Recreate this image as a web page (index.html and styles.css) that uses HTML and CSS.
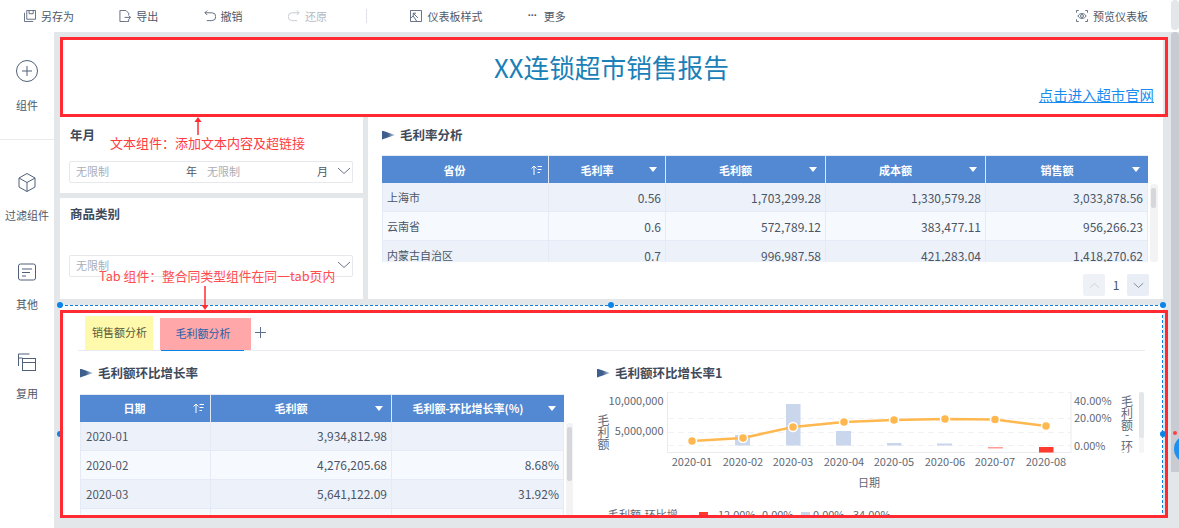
FILE: index.html
```html
<!DOCTYPE html>
<html lang="zh">
<head>
<meta charset="utf-8">
<title>XX连锁超市销售报告</title>
<link rel="stylesheet" href="styles.css">
</head>
<body>
<header class="toolbar">
  <div class="tool"><svg class="ti" viewBox="0 0 13 13"><path d="M.5 3v9.500H10"/><path d="M3 .5h9.500V10H3z"/><path d="M5.500 .5v3.500h4.500V.5"/></svg><span>另存为</span></div>
  <div class="tool"><svg class="ti" viewBox="0 0 13 13"><path d="M8 12.500H1V.5h6.500l3 3v2"/><path d="M10.500 10v2.500H8"/><path d="M6 8h6.500M10.500 6l2 2-2 2"/></svg><span>导出</span></div>
  <div class="tool"><svg class="ti" viewBox="0 0 13 13"><path d="M3.500.5 1 3l2.500 2.500"/><path d="M1 3h7.500a4 4 0 0 1 0 8.500H3"/></svg><span>撤销</span></div>
  <div class="tool off"><svg class="ti" viewBox="0 0 13 13"><path d="M9.500.5 12 3 9.500 5.500"/><path d="M12 3H4.500a4 4 0 0 0 0 8.500H10"/></svg><span>还原</span></div>
  <div class="sep"></div>
  <div class="tool"><svg class="ti" viewBox="0 0 13 13"><path d="M.5.500h12v12H.5z"/><path d="M3.500 3.500l5 5M3.500 3.500h3M3.500 3.500v3M.5 9l3-2.500 4 6"/></svg><span>仪表板样式</span></div>
  <div class="tool more"><span class="dots">···</span><span>更多</span></div>
  <div class="tool preview"><svg class="ti" viewBox="0 0 13 13"><path d="M.5 3V.5H3M10 .5h2.500V3M12.500 10v2.500H10M3 12.500H.5V10"/><path d="M2 6.500C4 3 9 3 11 6.500 9 10 4 10 2 6.500z"/><circle cx="6.500" cy="6.500" r="1.600"/></svg><span>预览仪表板</span></div>
  <div class="bar-top"></div>
</header>
<div class="main">
  <nav class="side">
    <div class="nav first">
      <svg class="ni" viewBox="0 0 22 22"><circle cx="11" cy="11" r="10.500"/><path d="M11 6v10M6 11h10"/></svg>
      <span>组件</span>
    </div>
    <div class="nav filter-nav">
      <svg class="ni" viewBox="0 0 22 22"><path d="M11 2.500l8 4.500v9l-8 4.500-8-4.500V7z"/><path d="M3 7l8 4.500L19 7M11 11.500v9"/></svg>
      <span>过滤组件</span>
    </div>
    <div class="nav other-nav">
      <svg class="ni" viewBox="0 0 22 22"><rect x="2.500" y="3" width="17" height="16" rx="2"/><path d="M6 8h10M6 11.500h8M6 15h4"/></svg>
      <span>其他</span>
    </div>
    <div class="nav reuse-nav">
      <svg class="ni" viewBox="0 0 22 22"><path d="M2.500 15V3h11"/><path d="M2.500 7h4"/><rect x="6.500" y="7.500" width="13" height="12"/><path d="M6.500 11.500h13"/></svg>
      <span>复用</span>
    </div>
  </nav>

  <main class="canvas">
    <section class="banner">
      <h1 class="report">XX连锁超市销售报告</h1>
      <a class="site" href="#">点击进入超市官网</a>
    </section>

    <section class="upper">
      <div class="filters">
        <div class="filter f1">
          <div class="f-title">年月</div>
          <div class="field">
            <span class="hint w1">无限制</span><span class="unit">年</span>
            <span class="hint w2">无限制</span><span class="unit">月</span>
            <svg class="chev" viewBox="0 0 14 8"><path d="M1 1l6 5.500L13 1"/></svg>
          </div>
        </div>
        <div class="filter f2">
          <div class="f-title">商品类别</div>
          <div class="field">
            <span class="hint grow">无限制</span>
            <svg class="chev" viewBox="0 0 14 8"><path d="M1 1l6 5.500L13 1"/></svg>
          </div>
        </div>
      </div>
      <div class="panel">
        <div class="w-title"><i class="flag"></i>毛利率分析</div>
        <div class="tbl-row">
          <div class="tbl-clip top">
            <table class="tbl t-top">
              <colgroup><col class="c167"><col class="c117"><col class="c160"><col class="c160"><col class="c162"></colgroup>
              <thead><tr>
                <th><div class="th"><span>省份</span><svg class="sort" viewBox="0 0 11 10"><path d="M3 10V1M.5 3.500 3 1l2.500 2.500M6.500 1.500H11M6.500 4.500h4M6.500 7.500h2.500"/></svg></div></th>
                <th><div class="th"><span>毛利率</span><i class="tri"></i></div></th>
                <th><div class="th"><span>毛利额</span><i class="tri"></i></div></th>
                <th><div class="th"><span>成本额</span><i class="tri"></i></div></th>
                <th><div class="th"><span>销售额</span><i class="tri"></i></div></th>
              </tr></thead>
              <tbody>
                <tr><td class="cn">上海市</td><td class="n">0.56</td><td class="n">1,703,299.28</td><td class="n">1,330,579.28</td><td class="n">3,033,878.56</td></tr>
                <tr><td class="cn">云南省</td><td class="n">0.6</td><td class="n">572,789.12</td><td class="n">383,477.11</td><td class="n">956,266.23</td></tr>
                <tr><td class="cn">内蒙古自治区</td><td class="n">0.7</td><td class="n">996,987.58</td><td class="n">421,283.04</td><td class="n">1,418,270.62</td></tr>
              </tbody>
            </table>
          </div>
          <div class="sb sb-top"><div class="thumb"></div></div>
        </div>
        <div class="pager">
          <div class="pg dis"><svg viewBox="0 0 14 8"><path d="M1 7l6-5.500L13 7"/></svg></div>
          <div class="pg-n">1</div>
          <div class="pg on"><svg viewBox="0 0 14 8"><path d="M1 1l6 5.500L13 1"/></svg></div>
        </div>
      </div>
    </section>

    <section class="tabw">
      <div class="tabs">
        <div class="tab yellow">销售额分析</div>
        <div class="tab pink">毛利额分析</div>
        <svg class="add" viewBox="0 0 11 11"><path d="M5.500 0v11M0 5.500h11"/></svg>
      </div>
      <div class="tab-body">
        <div class="left">
          <div class="w-title"><i class="flag"></i>毛利额环比增长率</div>
          <div class="tbl-row">
            <div class="tbl-clip bot">
              <table class="tbl t-bot">
                <colgroup><col class="c131"><col class="c181"><col class="c172"></colgroup>
                <thead><tr>
                  <th><div class="th"><span>日期</span><svg class="sort" viewBox="0 0 11 10"><path d="M3 10V1M.5 3.500 3 1l2.500 2.500M6.500 1.500H11M6.500 4.500h4M6.500 7.500h2.500"/></svg></div></th>
                  <th><div class="th"><span>毛利额</span><i class="tri"></i></div></th>
                  <th><div class="th"><span>毛利额-环比增长率(%)</span><i class="tri"></i></div></th>
                </tr></thead>
                <tbody>
                  <tr><td>2020-01</td><td class="n">3,934,812.98</td><td class="n"></td></tr>
                  <tr><td>2020-02</td><td class="n">4,276,205.68</td><td class="n">8.68%</td></tr>
                  <tr><td>2020-03</td><td class="n">5,641,122.09</td><td class="n">31.92%</td></tr>
                  <tr><td></td><td class="n"></td><td class="n"></td></tr>
                </tbody>
              </table>
            </div>
            <div class="sb sb-bot"><div class="thumb"></div></div>
          </div>
        </div>
        <div class="right">
          <div class="w-title"><i class="flag"></i>毛利额环比增长率1</div>
          <svg class="chart" viewBox="597 381 566 137">
            <defs><clipPath id="axis-clip"><rect x="1115" y="392" width="22" height="61"/></clipPath></defs>
            <g class="grid">
              <path d="M668 392.500H1071M668 418.500H1071M668 432.500H1071M668 445.500H1071"/>
            </g>
            <path class="axis" d="M667.500 392V452.500H1071V392"/>
            <g class="bar">
              <rect x="735" y="435" width="15" height="10.500"/>
              <rect x="786" y="404" width="14.500" height="41.500"/>
              <rect x="836" y="431" width="15" height="14.500"/>
              <rect x="887" y="443" width="14.500" height="2.500"/>
              <rect x="937" y="443.500" width="15" height="2"/>
            </g>
            <rect class="neg1" x="988" y="447" width="15" height="1.500"/>
            <rect class="neg2" x="1039" y="447" width="14.500" height="5.500"/>
            <polyline class="ln" points="692,441 743,438 793,427 844,422 894,420 945,419 995,419.500 1046,426"/>
            <g class="dot">
              <circle cx="692" cy="441" r="4.500"/><circle cx="743" cy="438" r="4.500"/>
              <circle cx="793" cy="427" r="4.500"/><circle cx="844" cy="422" r="4.500"/>
              <circle cx="894" cy="420" r="4.500"/><circle cx="945" cy="419" r="4.500"/>
              <circle cx="995" cy="419.500" r="4.500"/><circle cx="1046" cy="426" r="4.500"/>
            </g>
            <g class="lab">
              <text class="end" x="663.500" y="405">10,000,000</text>
              <text class="end" x="663.500" y="435">5,000,000</text>
              <text x="1074" y="405">40.00%</text>
              <text x="1074" y="422">20.00%</text>
              <text x="1074" y="450">0.00%</text>
              <text class="mid" x="692" y="465.500">2020-01</text>
              <text class="mid" x="743" y="465.500">2020-02</text>
              <text class="mid" x="793" y="465.500">2020-03</text>
              <text class="mid" x="844" y="465.500">2020-04</text>
              <text class="mid" x="894" y="465.500">2020-05</text>
              <text class="mid" x="945" y="465.500">2020-06</text>
              <text class="mid" x="995" y="465.500">2020-07</text>
              <text class="mid" x="1046" y="465.500">2020-08</text>
              <text class="mid" x="869" y="486.500">日期</text>
            </g>
            <g class="lab vert">
              <text class="mid" x="603.500" y="425">毛</text>
              <text class="mid" x="603.500" y="437">利</text>
              <text class="mid" x="603.500" y="449">额</text>
            </g>
            <g class="lab vert" clip-path="url(#axis-clip)">
              <text class="mid" x="1127" y="406">毛</text>
              <text class="mid" x="1127" y="418">利</text>
              <text class="mid" x="1127" y="430">额</text>
              <text class="mid" x="1127" y="439">-</text>
              <text class="mid" x="1127" y="451">环</text>
              <text class="mid" x="1127" y="463">比</text>
            </g>
            <rect class="mini-t" x="1139" y="392" width="5" height="61" rx="2"/>
            <rect class="mini" x="1139" y="392" width="5" height="46" rx="2"/>
            <g class="lab">
              <text x="608" y="519">毛利额-环比增...</text>
              <text x="718" y="519">12.00%</text>
              <text x="762" y="519">0.00%</text>
              <text x="813" y="519">0.00%</text>
              <text x="853" y="519">34.00%</text>
            </g>
            <rect class="neg2" x="699" y="512" width="9" height="6"/>
            <rect class="legend-b" x="801" y="512" width="9" height="6"/>
          </svg>
        </div>
      </div>
      <i class="handle h-tl"></i><i class="handle h-tm"></i><i class="handle h-tr"></i><i class="handle h-ml"></i><i class="handle h-mr"></i>
    </section>

    <div class="redbox r1"></div>
    <div class="redbox r2"></div>
    <div class="note n1">文本组件：添加文本内容及超链接</div>
    <div class="note n2">Tab 组件：整合同类型组件在同一tab页内</div>
    <svg class="arrow a1" viewBox="0 0 8 18"><path d="M4 18V4"/><path class="head" d="M4 0l3.500 5h-7z"/></svg>
    <svg class="arrow a2" viewBox="0 0 8 24"><path d="M4 0v19"/><path class="head" d="M4 24l3.500-5h-7z"/></svg>
  </main>

  <div class="page-bar"><div class="page-thumb"></div></div>
</div>
<div class="fab"></div>
<div class="fab-dot"></div>
</body>
</html>
```
FILE: styles.css
```css
* { box-sizing: border-box; }
html, body { margin: 0; padding: 0; }
body {
  width: 1179px;
  height: 528px;
  overflow: hidden;
  position: relative;
  background: #fff;
  font-family: "Noto Sans CJK SC", "Noto Sans", sans-serif;
  font-size: 11px;
  color: #4a5565;
}

/* toolbar */
.toolbar { height: 32px; display: flex; align-items: center; padding: 0 0 1px 24px; }
.tool { display: flex; align-items: center; gap: 5px; margin-right: 45.300px; color: #4e5868; white-space: nowrap; }
.tool.off { color: #b4bac2; margin-right: 39.500px; }
.ti { width: 12px; height: 12px; fill: none; stroke: #59657a; stroke-width: 1; flex: none; }
.off .ti { stroke: #c4c9d0; }
.sep { width: 1px; height: 14px; background: #dfe2e6; margin-right: 43px; }
.more { gap: 7px; margin-right: 0; }
.dots { width: 9px; line-height: 1; font-family: "Liberation Sans", sans-serif; font-weight: 700; letter-spacing: -0.600px; }
.preview { margin-left: auto; margin-right: 23px; }
.bar-top { width: 8px; height: 30px; background: #e4e7ea; border-radius: 4px; align-self: flex-start; }

.main { height: 496px; display: flex; }

/* sidebar */
.side { width: 54px; flex: none; background: #fff; }
.nav { display: flex; flex-direction: column; align-items: center; gap: 15px; line-height: 14px; color: #4e5868; white-space: nowrap; }
.nav.first { padding: 28px 0 27px; gap: 16px; border-bottom: 1px solid #e8eaed; }
.filter-nav { margin-top: 31px; }
.other-nav { margin-top: 39px; gap: 14px; }
.reuse-nav { margin-top: 40px; gap: 13px; }
.ni { width: 22px; height: 22px; fill: none; stroke: #4f6078; stroke-width: 1; }

/* canvas */
.canvas { flex: 1; min-width: 0; position: relative; overflow: hidden; background: #e4e7ea; padding: 5px 8px 0 6px; }
.banner { height: 80px; background: #fff; display: flex; flex-direction: column; padding: 0 9px 0 0; }
.report { margin: 12px 0 0; font-size: 25.700px; font-weight: 400; line-height: 36px; text-align: center; color: #1a80b8; padding-left: 9px; }
.site { align-self: flex-end; font-size: 14.400px; line-height: 20px; color: #1a8cf0; text-decoration: underline; }

.upper { display: grid; grid-template-columns: 303px 1fr; column-gap: 5px; height: 182px; }
.filters { display: flex; flex-direction: column; gap: 5px; }
.filter { background: #fff; padding: 0 10px 0 9px; }
.f1 { height: 76px; padding-top: 10px; }
.f2 { height: 101px; padding-top: 8px; }
.f-title, .w-title { font-size: 12.500px; font-weight: 700; line-height: 16px; color: #3f4a5a; }
.f-title { padding-left: 1px; }
.field { height: 21.500px; border: 1px solid #e6e8ec; border-radius: 2px; display: flex; align-items: center; padding: 0 1px 2px 6px; }
.f1 .field { margin-top: 18px; }
.f2 .field { margin-top: 33px; }
.hint { color: #a9aeb7; }
.w1 { width: 111px; }
.w2 { width: 111px; margin-left: 10px; }
.grow { flex: 1; }
.unit { color: #4e5868; width: 11px; }
.chev { width: 14px; height: 8px; fill: none; stroke: #6b7688; stroke-width: 1; margin-left: 9px; flex: none; }
.f2 .chev { margin-left: 0; }

.panel { background: #fff; padding: 10px 14px 0; min-width: 0; }
.w-title { display: flex; align-items: center; gap: 5px; white-space: nowrap; }
.flag {
  width: 13px; height: 9px; flex: none;
  background: linear-gradient(90deg, #3c5f8d 45%, #c9d2de);
  clip-path: polygon(0 0, 100% 50%, 0 100%);
  filter: blur(0.300px);
}
.tbl-row { display: flex; align-items: flex-start; gap: 2px; }
.panel .tbl-row { margin-top: 12px; }
.tbl-clip { overflow: hidden; flex: none; }
.tbl-clip.top { width: 766px; height: 107px; }
.tbl-clip.bot { width: 484px; height: 124px; }
.tbl { border-collapse: separate; border-spacing: 0; table-layout: fixed; width: 100%; }
.c167 { width: 167px; } .c117 { width: 117px; } .c160 { width: 160px; } .c162 { width: 162px; }
.c131 { width: 131px; } .c181 { width: 181px; } .c172 { width: 172px; }
.tbl th { height: 28px; padding: 0; background: #5389d2; color: #fff; font-size: 11px; font-weight: 700; border-right: 1px solid #dfe8f5; border-top: 1px solid #e4ebf5; }
.tbl th:last-child { border-right: 0; }
.t-bot th { padding-bottom: 1px; }
.th { display: flex; align-items: center; }
.th span { flex: 1; text-align: center; white-space: nowrap; }
.tri { width: 0; height: 0; margin: 0 8px 0 4px; border-left: 4.500px solid transparent; border-right: 4.500px solid transparent; border-top: 5px solid #fff; flex: none; }
.sort { width: 11px; height: 10px; margin: 0 6px 0 4px; fill: none; stroke: #fff; stroke-width: 1; flex: none; }
.tbl td { height: 29px; padding: 0 4px; font-size: 11.500px; color: #4a5565; white-space: nowrap; border-right: 1px solid #e4ebf6; border-bottom: 1px solid #e4ebf6; background: #f6f9fe; }
.tbl td:first-child { border-left: 1px solid #e4ebf6; }
.tbl tbody tr:nth-child(odd) td { background: #edf2fa; }
.t-bot td { padding-bottom: 1px; }
.t-bot td:first-child { padding-left: 5px; }
.tbl td.cn { font-size: 11px; }
.tbl td.n { text-align: right; font-size: 12px; }
.sb { flex: none; background: #f3f3f4; border-radius: 3px; padding: 4px 1px; }
.sb-top { width: 8px; height: 78px; margin-top: 29px; }
.sb-bot { width: 7px; height: 95px; margin-top: 29px; }
.thumb { width: 5px; background: #d6d7da; border-radius: 2px; }
.sb-top .thumb { height: 20px; }
.sb-bot .thumb { height: 54px; }

.pager { display: flex; justify-content: flex-end; margin-top: 12px; align-items: center; }
.pg { width: 22px; height: 22px; border-radius: 2px; display: flex; align-items: center; justify-content: center; }
.pg svg { width: 11px; height: 7px; fill: none; stroke: #6b7688; stroke-width: 1; }
.pg.dis { background: #eef1f6; }
.pg.dis svg { stroke: #c9cdd3; }
.pg.on { background: #e8edf6; }
.pg-n { width: 22px; text-align: center; font-size: 12px; color: #4a5565; padding-bottom: 2px; }

/* tab widget */
.tabw { position: relative; height: 213px; margin-top: 6px; background: #fff; border: 1px dashed #1080e0; border-bottom: 0; }
.tabs { display: flex; align-items: flex-end; height: 45px; margin: 0 17px; padding-left: 7px; border-bottom: 1px solid #e8ebf0; }
.tab { display: flex; align-items: center; justify-content: center; white-space: nowrap; padding-bottom: 2px; }
.tab.yellow { width: 68px; height: 34px; background: #fff9ab; color: #5a5a3a; margin-right: 7px; padding-left: 1px; }
.tab.pink { position: relative; width: 91px; height: 32px; background: #ffa7a9; color: #2a5fa8; padding-right: 5px; }
.tab.pink::after { content: ""; position: absolute; left: 1px; bottom: -1px; width: 83px; height: 1px; background: #0a84e8; }
.add { width: 11px; height: 11px; margin: 0 0 12px 4px; fill: none; stroke: #5c6f8a; stroke-width: 1; }
.tab-body { display: flex; padding: 14px 0 0 19px; gap: 24px; height: 167px; overflow: hidden; }
.left { width: 493px; flex: none; }
.left .tbl-row { margin-top: 13px; }
.right { flex: 1; min-width: 0; }
.chart { display: block; width: 566px; height: 137px; }
.grid path { stroke: #f0f1f4; fill: none; stroke-dasharray: 6 4; }
.axis { fill: none; stroke: #e9ebef; }
.bar rect { fill: #c9d6ec; }
.neg1 { fill: #ff9c98; }
.neg2 { fill: #ff3b30; }
.legend-b { fill: #c9d6ec; }
.ln { fill: none; stroke: #ffb84f; stroke-width: 2.500; }
.dot circle { fill: #ffb84f; stroke: #fff; stroke-width: 1.500; }
.lab text { font-size: 11px; fill: #5f6874; }
.lab.vert text { font-size: 12px; }
.lab .end { text-anchor: end; }
.lab .mid { text-anchor: middle; }
.mini { fill: #e4e7ea; }
.mini-t { fill: #f4f5f6; }

.handle { position: absolute; width: 6px; height: 6px; border-radius: 50%; background: #0a84e8; }
.h-tl { left: -4px; top: -4px; }
.h-tm { left: 547px; top: -4px; }
.h-tr { right: -4px; top: -4px; }
.h-ml { left: -4px; top: 125px; }
.h-mr { right: -4px; top: 125px; }

/* annotations laid over the canvas */
.redbox { position: absolute; border: 3px solid #ff2a32; left: 6px; pointer-events: none; }
.r1 { top: 5px; width: 1108px; height: 80px; }
.r2 { top: 278px; width: 1107.500px; height: 208px; }
.note { position: absolute; font-size: 13px; line-height: 18px; color: #ff3b3f; white-space: nowrap; }
.n1 { left: 56px; top: 102px; }
.n2 { left: 45px; top: 235px; color: #ff4d50; font-size: 12.800px; }
.arrow { position: absolute; width: 8px; fill: none; stroke: #ff2a32; stroke-width: 1.500; }
.arrow .head { fill: #ff2a32; stroke: none; }
.a1 { left: 140px; top: 85px; height: 18px; }
.a2 { left: 147px; top: 254px; height: 24px; }

.page-bar { width: 8px; flex: none; background: #e4e7ea; }
.page-thumb { height: 440px; background: #c8ccd2; border-radius: 4px 4px 0 0; }
.fab { position: absolute; left: 1174px; top: 435px; width: 28px; height: 28px; border-radius: 50%; background: #1e90f0; }
.fab-dot { position: absolute; left: 1173px; top: 431px; width: 4px; height: 4px; border-radius: 50%; background: #ff4040; }
```
